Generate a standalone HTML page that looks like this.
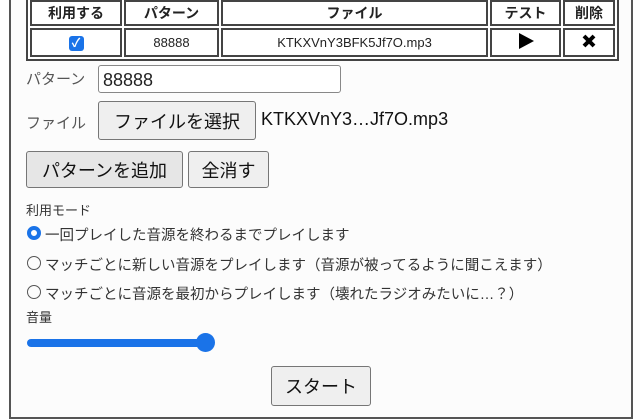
<!DOCTYPE html>
<html><head><meta charset="utf-8"><style>
body{margin:0;width:640px;height:400px;background:#fff;font-family:"Liberation Sans","Noto Sans CJK JP",sans-serif;color:#222;overflow:hidden;position:relative}
.frame{position:absolute;left:9px;top:-5px;width:620px;height:420px;border:2px solid #555;background:#fcfcfc}
.a{position:absolute}
table{position:absolute;left:26px;top:-4px;width:587px;box-sizing:border-box;table-layout:fixed;border:2px solid #444;border-collapse:separate;border-spacing:2px;font-size:13px;background:#fff}
td,th{border:2px solid #444;text-align:center;padding:0;overflow:hidden;white-space:nowrap}
th{height:22px;font-weight:bold;font-size:14px}
td{height:25px}
.btn{position:absolute;background:#efefef;border:1px solid #767676;border-radius:3px;font-size:18px;display:flex;align-items:center;justify-content:center;color:#111}
.rad{position:absolute;width:14px;height:14px;border:1.5px solid #555;border-radius:50%;box-sizing:border-box}
.lbl{position:absolute;font-size:14.5px;color:#333;white-space:nowrap}
</style></head><body>
<div class="frame"></div>
<table>
<colgroup><col style="width:92px"><col style="width:95px"><col style="width:267px"><col style="width:71px"><col style="width:52px"></colgroup>
<tr><th>利用する</th><th>パターン</th><th>ファイル</th><th>テスト</th><th>削除</th></tr>
<tr><td><span style="display:inline-block;width:15px;height:15px;background:#1a73e8;border-radius:3px;color:#fff;font-size:12px;line-height:15px;font-weight:bold">✓</span></td><td>88888</td><td>KTKXVnY3BFK5Jf7O.mp3</td><td><svg width="18" height="18" viewBox="0 0 18 18"><path d="M2 1L17 9L2 17Z" fill="#000"/></svg></td><td><svg width="16" height="16" viewBox="0 0 16 16"><path d="M3 3L13 13M13 3L3 13" stroke="#000" stroke-width="4"/></svg></td></tr>
</table>
<div class="lbl" style="left:26px;top:68px;font-size:15px;color:#555">パターン</div>
<div class="a" style="left:98px;top:65px;width:243px;height:28px;border:1px solid #888;border-radius:3px;background:#fff;font-size:18px;line-height:28px;padding-left:4px;box-sizing:border-box">88888</div>
<div class="lbl" style="left:26px;top:112px;font-size:15px;color:#555">ファイル</div>
<div class="btn" style="left:98px;top:101px;width:156px;height:37px">ファイルを選択</div>
<div class="lbl" style="left:261px;top:109px;font-size:18px;color:#111">KTKXVnY3…Jf7O.mp3</div>
<div class="btn" style="left:26px;top:151px;width:155px;height:35px;background:#e6e6e6">パターンを追加</div>
<div class="btn" style="left:188px;top:151px;width:79px;height:35px">全消す</div>
<div class="lbl" style="left:26px;top:200px;font-size:13px">利用モード</div>
<div class="rad" style="left:27px;top:226px;border:4px solid #1a73e8;background:#fff"></div>
<div class="lbl" style="left:45px;top:224px">一回プレイした音源を終わるまでプレイします</div>
<div class="rad" style="left:27px;top:256px"></div>
<div class="lbl" style="left:45px;top:254px">マッチごとに新しい音源をプレイします（音源が被ってるように聞こえます）</div>
<div class="rad" style="left:27px;top:285px"></div>
<div class="lbl" style="left:45px;top:283px">マッチごとに音源を最初からプレイします（壊れたラジオみたいに…？）</div>
<div class="lbl" style="left:26px;top:307px;font-size:13px">音量</div>
<div class="a" style="left:27px;top:339px;width:180px;height:8px;background:#1a73e8;border-radius:4px"></div>
<div class="a" style="left:196px;top:333px;width:19px;height:19px;background:#1a73e8;border-radius:50%"></div>
<div class="btn" style="left:271px;top:366px;width:98px;height:38px">スタート</div>
</body></html>
